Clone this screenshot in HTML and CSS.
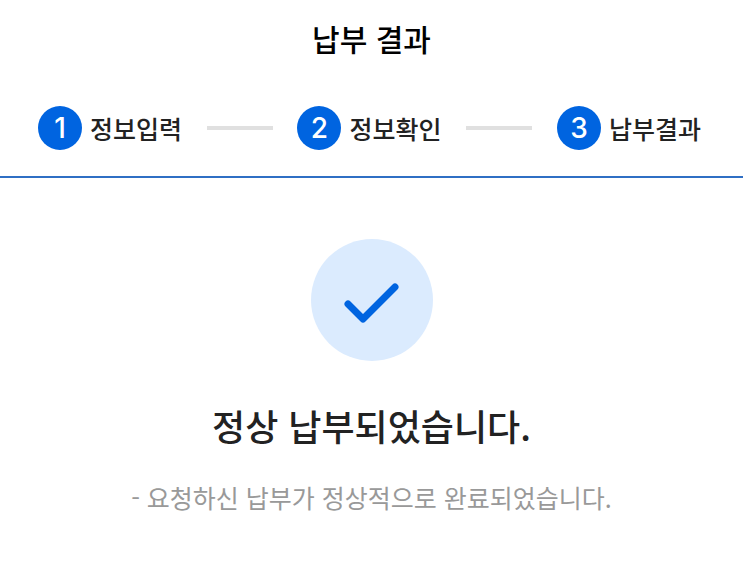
FILE: index.html
```html
<!DOCTYPE html>
<html lang="ko">
<head>
    <meta charset="UTF-8">
    <meta name="viewport" content="width=device-width, initial-scale=1">
    <title>납부 결과</title>
    <link rel="stylesheet" href="styles.css">
</head>
<body>

<header class="header">
    <h1 class="header__title">납부 결과</h1>
    <ol class="steps">
        <li class="step"><span class="step__num">1</span><span class="step__label">정보입력</span></li>
        <li class="steps__line" aria-hidden="true"></li>
        <li class="step"><span class="step__num">2</span><span class="step__label">정보확인</span></li>
        <li class="steps__line" aria-hidden="true"></li>
        <li class="step" aria-current="step"><span class="step__num">3</span><span class="step__label">납부결과</span></li>
    </ol>
</header>

<main class="result">
    <div class="result__icon">
        <svg width="122" height="122" viewBox="0 0 122 122" fill="none" aria-hidden="true">
            <path d="M37 65L52 80L84 48" stroke="#0064e0" stroke-width="7" stroke-linecap="round" stroke-linejoin="round"/>
        </svg>
    </div>
    <h2 class="result__title">정상 납부되었습니다.</h2>
    <p class="result__text">- 요청하신 납부가 정상적으로 완료되었습니다.</p>
</main>

</body>
</html>
```
FILE: styles.css
```css
*{
    box-sizing: border-box;
    margin:0;
    padding:0;
}
body{
    background-color: #fff;
    color:#222;
    font-family: "Noto Sans CJK KR", sans-serif;
}
.header{
    padding:18px 0 26px;
    border-bottom:2px solid #2f6fc4;
}
.header__title{
    color:#000;
    font-size:30px;
    font-weight:500;
    line-height:40px;
    text-align:center;
}
.steps{
    display:flex;
    align-items:center;
    justify-content:space-between;
    margin-top:48px;
    padding:0 42px 0 38px;
    list-style:none;
}
.steps__line{
    width:66px;
    height:4px;
    background-color: #e0e0e0;
}
.step{
    display:flex;
    align-items:center;
    gap:8px;
}
.step__num{
    width:44px;
    height:44px;
    border-radius:50%;
    background-color: #0064e0;
    color:#fff;
    font-family: Inter, sans-serif;
    font-size:28px;
    font-weight:500;
    line-height:44px;
    text-align:center;
}
.step__label{
    font-size:25px;
    font-weight:500;
    line-height:44px;
}
.result{
    padding:61px 20px;
    text-align:center;
}
.result__icon{
    display:flex;
    align-items:center;
    justify-content:center;
    width:122px;
    height:122px;
    margin:0 auto;
    border-radius:50%;
    background-color: #dbebfe;
}
.result__title{
    margin-top:38px;
    font-size:36px;
    font-weight:500;
    line-height:52px;
}
.result__text{
    margin-top:28px;
    color:#999;
    font-size:25px;
    line-height:36px;
}
```
